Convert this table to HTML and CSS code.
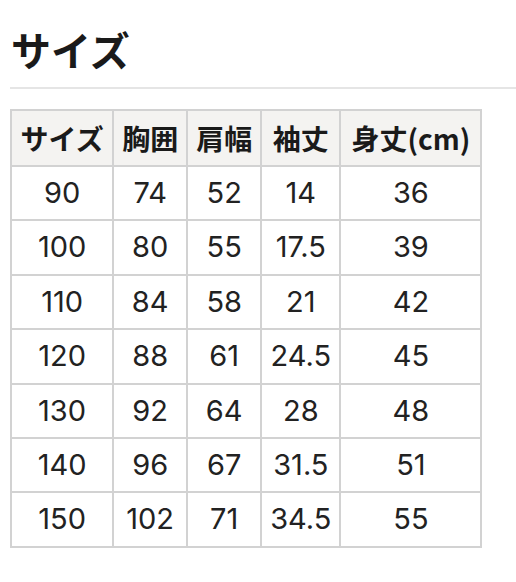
FILE: index.html
```html
<!DOCTYPE html>
<html lang="ja">
<head>
<meta charset="utf-8">
<link rel="stylesheet" href="styles.css">
</head>
<body>
<section class="size-section">
  <h2 class="size-title">サイズ</h2>
  <table class="size-table">
    <thead>
      <tr><th class="first-col">サイズ</th><th>胸囲</th><th>肩幅</th><th class="sleeve-col">袖丈</th><th class="unit-col">身丈(cm)</th></tr>
    </thead>
    <tbody>
      <tr><td>90</td><td>74</td><td>52</td><td>14</td><td>36</td></tr>
      <tr><td>100</td><td>80</td><td>55</td><td>17.5</td><td>39</td></tr>
      <tr><td>110</td><td>84</td><td>58</td><td>21</td><td>42</td></tr>
      <tr><td>120</td><td>88</td><td>61</td><td>24.5</td><td>45</td></tr>
      <tr><td>130</td><td>92</td><td>64</td><td>28</td><td>48</td></tr>
      <tr><td>140</td><td>96</td><td>67</td><td>31.5</td><td>51</td></tr>
      <tr><td>150</td><td>102</td><td>71</td><td>34.5</td><td>55</td></tr>
    </tbody>
  </table>
</section>
</body>
</html>
```
FILE: styles.css
```css
html, body {
  margin: 0;
  padding: 0;
  background: #ffffff;
}
body {
  font-family: "Noto Sans CJK JP", "Noto Sans", sans-serif;
  color: #1a1a1a;
}
.size-section {
  padding: 20px 0 0 10px;
}
.size-title {
  margin: 0;
  font-size: 40px;
  font-weight: 700;
  line-height: 58px;
  padding-left: 1px;
  padding-bottom: 9px;
  border-bottom: 2px solid #e5e5e5;
}
.size-table {
  margin-top: 20px;
  border-collapse: collapse;
  border: 2px solid #d2d2d2;
}
.size-table th,
.size-table td {
  border: 2px solid #d2d2d2;
  padding: 8px 8px;
  line-height: 36.4px;
  text-align: center;
  white-space: nowrap;
}
.size-table th {
  background: #f4f3f1;
  font-size: 28px;
  font-weight: 700;
  padding-top: 9px;
  padding-bottom: 8.5px;
}
.size-table th.first-col {
  padding-left: 8.5px;
  padding-right: 8.5px;
}
.size-table th.sleeve-col {
  padding-left: 8.5px;
  padding-right: 8.5px;
}
.size-table th.unit-col {
  padding-left: 10px;
  padding-right: 10px;
}
.size-table td {
  font-family: Inter, "Noto Sans CJK JP", sans-serif;
  font-size: 29px;
  font-weight: 400;
  color: #222222;
}
```
